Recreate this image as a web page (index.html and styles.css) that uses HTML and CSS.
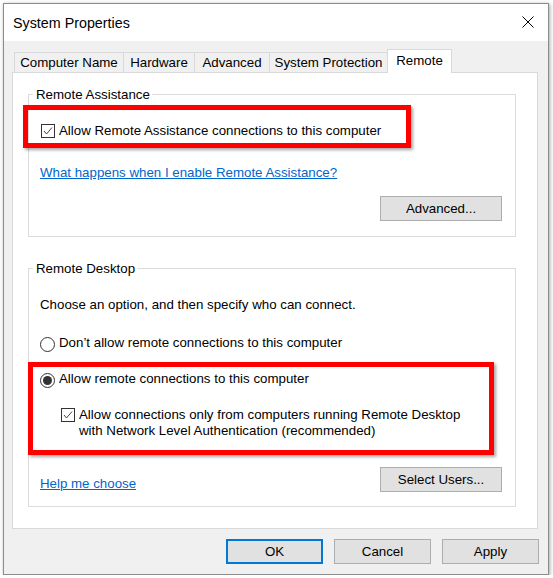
FILE: index.html
```html
<!DOCTYPE html>
<html>
<head>
<meta charset="utf-8">
<title>System Properties</title>
<link rel="stylesheet" href="styles.css">
</head>
<body>
<div class="window">
  <div class="titlebar">
    <span class="title">System Properties</span>
    <svg class="close" viewBox="0 0 12 12"><path d="M0.5 0.5 L11.5 11.5 M11.5 0.5 L0.5 11.5" stroke="#000" stroke-width="1" fill="none"/></svg>
  </div>
  <div class="body">
    <div class="tabs">
      <div class="tab w1">Computer Name</div>
      <div class="tab w2">Hardware</div>
      <div class="tab w3">Advanced</div>
      <div class="tab w4">System Protection</div>
      <div class="tab w5 active">Remote</div>
    </div>
    <div class="panel">
      <fieldset class="group g1">
        <legend>Remote Assistance</legend>
        <div class="gbody gb1">
          <div class="row cbrow1">
            <svg class="cb" viewBox="0 0 14 14"><rect x="0.5" y="0.5" width="13" height="13" fill="#fff" stroke="#333"/><path d="M3 7 L5.5 10 L11 3.5" fill="none" stroke="#444" stroke-width="1"/></svg>
            <span>Allow Remote Assistance connections to this computer</span>
          </div>
          <a class="link link1" href="#">What happens when I enable Remote Assistance?</a>
          <div class="btnrow">
            <button class="btn wide">Advanced...</button>
          </div>
        </div>
      </fieldset>
      <fieldset class="group g2">
        <legend>Remote Desktop</legend>
        <div class="gbody gb2">
          <p class="choose">Choose an option, and then specify who can connect.</p>
          <div class="row radio1">
            <svg class="rb" viewBox="0 0 15 15"><circle cx="7.5" cy="7.5" r="7" fill="#fff" stroke="#333"/></svg>
            <span>Don’t allow remote connections to this computer</span>
          </div>
          <div class="row radio2">
            <svg class="rb" viewBox="0 0 15 15"><circle cx="7.5" cy="7.5" r="7" fill="#fff" stroke="#333"/><circle cx="7.5" cy="7.5" r="4.5" fill="#333"/></svg>
            <span>Allow remote connections to this computer</span>
          </div>
          <div class="row cbrow2">
            <svg class="cb" viewBox="0 0 14 14"><rect x="0.5" y="0.5" width="13" height="13" fill="#fff" stroke="#333"/><path d="M3 7 L5.5 10 L11 3.5" fill="none" stroke="#444" stroke-width="1"/></svg>
            <span class="wrap">Allow connections only from computers running Remote Desktop with Network Level Authentication (recommended)</span>
          </div>
          <div class="bottomrow">
            <a class="link link2" href="#">Help me choose</a>
            <button class="btn wide">Select Users...</button>
          </div>
        </div>
      </fieldset>
      <div class="mark mark1"></div>
      <div class="mark mark2"></div>
    </div>
    <div class="footer">
      <button class="btn default">OK</button>
      <button class="btn">Cancel</button>
      <button class="btn">Apply</button>
    </div>
  </div>
</div>
</body>
</html>
```
FILE: styles.css
```css
html, body {
  margin: 0;
  padding: 0;
  background: #fff;
}
body {
  font-family: "Liberation Sans", Arial, sans-serif;
  font-size: 13.3px;
  color: #000;
}
.window {
  margin: 3px 0 0 3px;
  width: 546px;
  height: 572px;
  box-sizing: border-box;
  border: 1px solid #8c8c8c;
  box-shadow: 1px 1px 4px rgba(0, 0, 0, 0.35);
  background: #f0f0f0;
  display: flex;
  flex-direction: column;
}
.titlebar {
  height: 37px;
  flex: none;
  background: #fff;
  display: flex;
  align-items: center;
  justify-content: space-between;
  padding: 0 14px 0 9px;
}
.title {
  font-size: 14.3px;
  line-height: 37px;
  padding-top: 1px;
}
.close {
  display: block;
  width: 12px;
  height: 12px;
  margin-top: -1px;
}
.body {
  flex: 1;
  padding: 8px 9px 0 8px;
}
.tabs {
  display: flex;
  align-items: flex-end;
  height: 23px;
  margin-left: 2px;
}
.tab {
  box-sizing: border-box;
  height: 20px;
  border: 1px solid #d9d9d9;
  border-bottom: 0;
  line-height: 19px;
  text-align: center;
  background: #f0f0f0;
  margin-left: -1px;
  white-space: nowrap;
}
.tab:first-child { margin-left: 0; }
.w1 { width: 110px; }
.w2 { width: 72px; }
.w3 { width: 76px; }
.w4 { width: 119px; }
.w5 { width: 65px; }
.tab.active {
  height: 24px;
  padding-top: 1px;
  padding-bottom: 3px;
  background: #fff;
  margin-bottom: -1px;
  position: relative;
  z-index: 1;
}
.panel {
  position: relative;
  box-sizing: border-box;
  width: 526px;
  height: 457px;
  background: #fff;
  border: 1px solid #d9d9d9;
}
.group {
  box-sizing: border-box;
  width: 488px;
  min-inline-size: 0;
  margin: 0 0 0 15px;
  padding: 0;
  border: 1px solid #dcdcdc;
}
.g1 { margin-top: 13px; }
.g2 { margin-top: 23px; }
.group legend {
  margin-left: 4px;
  padding: 0 2px 0 3px;
  line-height: 17px;
}
.gbody {
  padding: 0 13px 15px 11px;
  line-height: 16px;
}
.gb2 { padding-bottom: 14px; }
.row {
  display: flex;
  align-items: flex-start;
  gap: 4px;
}
.cb {
  flex: none;
  width: 14px;
  height: 14px;
  margin: 1px 0 -1px 0;
}
.rb {
  flex: none;
  width: 15px;
  height: 15px;
  margin: 2px 0 -1px 0;
}
.cbrow1 { margin-top: 20px; padding-left: 1px; }
.link {
  color: #0066cc;
  text-decoration: underline;
}
.link1 {
  display: block;
  width: fit-content;
  margin-top: 26px;
}
.btnrow {
  display: flex;
  justify-content: flex-end;
  margin-top: 15px;
}
.btn {
  box-sizing: border-box;
  height: 25px;
  width: 97px;
  padding: 0;
  margin: 0;
  background: #e1e1e1;
  border: 1px solid #adadad;
  font: inherit;
  color: #000;
  line-height: 22px;
}
.btn.wide { width: 122px; }
.btn.default { border: 2px solid #0078d7; }
.choose {
  margin: 20px 0 0 0;
}
.radio1 { margin-top: 22px; }
.radio2 { margin-top: 20px; }
.cbrow2 { margin-top: 20px; padding-left: 21px; }
.wrap { max-width: 395px; }
.bottomrow {
  display: flex;
  justify-content: space-between;
  align-items: flex-start;
  margin-top: 28px;
}
.link2 { margin-top: 9px; }
.mark {
  position: absolute;
  box-sizing: border-box;
  border: 5px solid #ff0000;
  box-shadow: 2px 2px 3px rgba(0, 0, 0, 0.35);
  pointer-events: none;
}
.mark1 { left: 10px; top: 32px; width: 388px; height: 43px; }
.mark2 { left: 15px; top: 289px; width: 466px; height: 93px; }
.footer {
  display: flex;
  justify-content: flex-end;
  gap: 11px;
  margin-top: 10px;
}
```
